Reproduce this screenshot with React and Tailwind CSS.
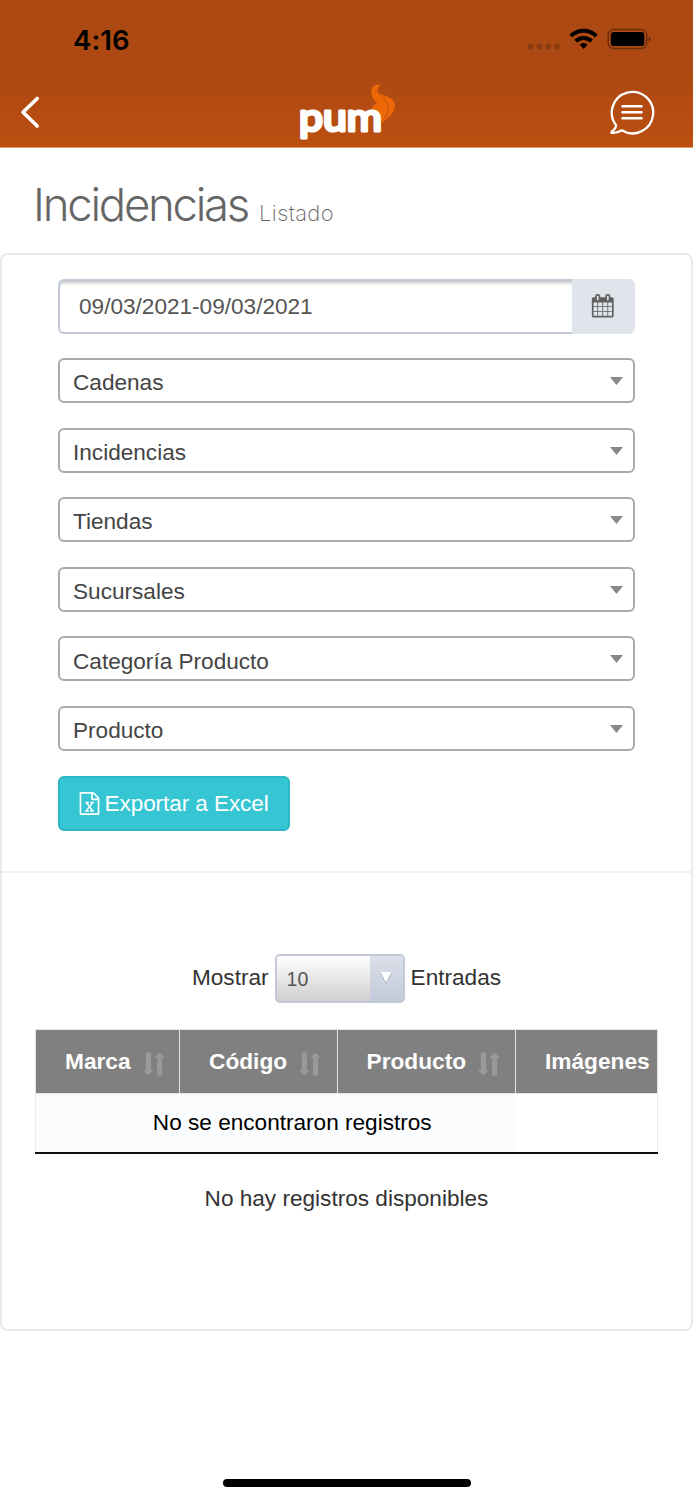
import React from 'react';

const filters = ['Cadenas', 'Incidencias', 'Tiendas', 'Sucursales', 'Categoría Producto', 'Producto'];

function CalendarIcon() {
  return (
    <svg className="h-[23.5px] w-[23.5px]" viewBox="0 0 1792 1792" fill="#606060">
      <path d="M192 1664h288v-288h-288v288zm352 0h320v-288h-320v288zm-352-352h288v-320h-288v320zm352 0h320v-320h-320v320zm-352-384h288v-288h-288v288zm736 736h320v-288h-320v288zm-384-736h320v-288h-320v288zm768 736h288v-288h-288v288zm-384-352h320v-320h-320v320zm-352-864v-288q0-13-9.5-22.5t-22.5-9.5h-64q-13 0-22.5 9.5t-9.5 22.5v288q0 13 9.5 22.5t22.5 9.5h64q13 0 22.5-9.5t9.5-22.5zm736 864h288v-320h-288v320zm-384-384h320v-288h-320v288zm384 0h288v-288h-288v288zm32-480v-288q0-13-9.5-22.5t-22.5-9.5h-64q-13 0-22.5 9.5t-9.5 22.5v288q0 13 9.5 22.5t22.5 9.5h64q13 0 22.5-9.5t9.5-22.5zm384-64v1280q0 52-38 90t-90 38h-1408q-52 0-90-38t-38-90v-1280q0-52 38-90t90-38h128v-96q0-66 47-113t113-47h64q66 0 113 47t47 113v96h384v-96q0-66 47-113t113-47h64q66 0 113 47t47 113v96h128q52 0 90 38t38 90z" />
    </svg>
  );
}

function ExcelIcon() {
  return (
    <svg className="h-[23px] w-[23px]" viewBox="0 0 1792 1792" fill="white">
      <path d="M1596 380q28 28 48 76t20 88v1152q0 40-28 68t-68 28h-1344q-40 0-68-28t-28-68v-1600q0-40 28-68t68-28h896q40 0 88 20t76 48zm-444-244v376h376q-10-29-22-41l-313-313q-12-12-41-22zm384 1528v-1024h-416q-40 0-68-28t-28-68v-416h-768v1536h1280zm-979-234v106h281v-106h-75l103-161q5-7 10-16.5t7.5-13.5 3.5-4h2q1 4 5 10 2 4 4.5 7.5t6 8 6.5 8.5l107 161h-76v106h291v-106h-68l-192-273 195-282h67v-107h-279v107h74l-103 159q-4 7-10 16.5t-9 13.5l-2 3h-2q-1-4-5-10-6-11-17-23l-106-159h76v-107h-290v107h68l189 272-194 283h-68z" />
    </svg>
  );
}

function SortIcon() {
  return (
    <svg className="mt-[5px] h-[24px] w-[22px]" viewBox="0 0 22 24" fill="#999999">
      <path d="M2.9 0.5h5v17.5h2.9L5.4 23.4 0 18h2.9z" />
      <path d="M14.1 23.4h5V6H22L16.6 0.5 11.2 6h2.9z" />
    </svg>
  );
}

function Header() {
  return (
    <header className="flex h-[148px] flex-col border-b border-[#e09a70] bg-linear-to-b from-[#ad4913] via-[#ad4812] via-50% to-[#bc4f11]">
      <div className="flex h-[78px] items-center justify-between pl-[73px] pr-[41px]">
        <span className="pt-[1px] font-['Inter'] text-[27.5px] leading-[30px] font-semibold tracking-[0.1px] text-black">4:16</span>
        <svg className="h-[22px] w-[125px]" viewBox="0 0 125 22">
          <g fill="#8a3a10">
            <rect x="1" y="15.8" width="5.4" height="5.6" rx="1.6" />
            <rect x="9.8" y="15.8" width="5.4" height="5.6" rx="1.6" />
            <rect x="18.6" y="15.8" width="5.4" height="5.6" rx="1.6" />
            <rect x="27.2" y="15.8" width="5.4" height="5.6" rx="1.6" />
          </g>
          <g fill="none" stroke="#000" strokeWidth="4">
            <path d="M43.9 8.1a18 18 0 0 1 25.4 0" />
            <path d="M48.6 13.2a11.4 11.4 0 0 1 16 0" />
          </g>
          <path d="M52.6 16.6a6.2 6.2 0 0 1 8 0L56.6 21z" fill="#000" />
          <rect x="81.2" y="1.6" width="38.5" height="19" rx="5.5" fill="none" stroke="#6e2e0c" strokeWidth="1.5" />
          <rect x="83.8" y="4.1" width="33.5" height="14" rx="3.2" />
          <path d="M121.7 8.2q2.2 1 2.2 2.9t-2.2 2.9z" fill="#6e2e0c" />
        </svg>
      </div>
      <div className="flex h-[69px] items-center justify-between pl-[20px] pr-[38px]">
        <svg className="mb-[2px] h-[34px] w-[22px]" viewBox="0 0 22 34" fill="none" stroke="white" strokeWidth="3.6" strokeLinecap="round" strokeLinejoin="round">
          <path d="M17.2 3.5L3 17.2 17.2 31" />
        </svg>
        <svg className="ml-[46px] h-[60px] w-[104px]" viewBox="0 0 104 60">
          <path d="M84.500 1.800C79 .5 74.300 3.500 74.300 9c0 6 4.500 9 5.800 12-3-.5-5.500 3-5.500 7.500 4 0 8.500 3 9.500 7.500l1.500 3.500C91 35 98 30 98 22.500 98 15.500 90 13.500 83.500 11 80.500 9.500 79 4 84.500 1.800z" fill="#ee6808" />
          <path d="M79 7c4 6 12 11 12.500 18 .3 5-3 8-5 12" fill="none" stroke="#b54d10" strokeWidth="0.9" />
          <text x="2" y="47.500" fontFamily="Lato, sans-serif" fontWeight="400" fontSize="39" fill="white" stroke="white" strokeWidth="3.2" strokeLinejoin="round" textLength="83" lengthAdjust="spacingAndGlyphs">pum</text>
        </svg>
        <svg className="mb-[2px] h-[46px] w-[46px]" viewBox="0 0 46 46" fill="none" stroke="white" strokeWidth="2.3" strokeLinecap="round" strokeLinejoin="round">
          <path d="M7.200 36.400A20.700 20.700 0 1 1 12.700 41.300Q8 44.500 2.600 43.800Q2 42.800 3.800 41.600Q6.800 39.500 7.200 36.400z" />
          <path d="M13.5 17.2h19M13.5 23.2h19M13.5 29.2h19" strokeWidth="2.6" />
        </svg>
      </div>
    </header>
  );
}

export default function App() {
  return (
    <div className="flex h-[1500px] w-[693px] flex-col overflow-hidden bg-white font-['Liberation_Sans',sans-serif] text-[22.6px] text-[#333]">
      <Header />
      <h1 className="flex h-[105px] items-baseline pl-[33px] pt-[25px] font-['Inter'] font-light text-[#666]">
        <span className="w-[226px] text-[45.5px] leading-[64px] tracking-[-2.25px]">Incidencias</span>
        <small className="text-[22px] font-extralight tracking-[0.4px] text-[#666]">Listado</small>
      </h1>
      <main className="h-[1078px] rounded-[8px] border-2 border-[#e7ecf1]">
        <form className="flex h-[618px] flex-col gap-[24.6px] border-b-2 border-[#edf1f5] pl-[56px] pr-[56.5px] pt-[23.5px]">
          <div className="flex h-[55px] shrink-0">
            <div className="flex flex-1 items-center rounded-l-[6px] border-2 border-r-0 border-[#c2cad8] pl-[19px] pt-[2px] text-[#555] shadow-[inset_0_4px_4px_-3px_#aaa]">
              09/03/2021-09/03/2021
            </div>
            <div className="flex w-[63px] items-center justify-center rounded-r-[6px] bg-[#e0e5ec]"><CalendarIcon /></div>
          </div>
          {filters.map((name) => (
            <div key={name} className="flex h-[45px] shrink-0 items-center justify-between rounded-[6px] border-2 border-[#aaa] pl-[13px] pr-[10px] pt-[5px] text-[#444]">
              {name}
              <svg className="mb-[4px] h-[8px] w-[13px]" viewBox="0 0 13 8" fill="#888"><path d="M0 0h13L6.5 8z" /></svg>
            </div>
          ))}
          <div className="flex h-[55px] w-[232px] shrink-0 items-center gap-[4px] rounded-[6px] border-2 border-[#2bb8c4] bg-[#36c6d3] pl-[17.5px] text-white">
            <ExcelIcon />
            <span className="whitespace-nowrap pt-[2px] tracking-[-0.1px]">Exportar a Excel</span>
          </div>
        </form>
        <section className="px-[33px] pt-[81px]">
          <div className="flex items-center justify-center gap-[6px]">
            <span className="pb-[2px]">Mostrar</span>
            <div className="flex h-[49px] w-[130px] overflow-hidden rounded-[5px] border-2 border-[#c2cad8] bg-linear-to-b from-white to-[#cfcfcf]">
              <span className="flex flex-1 items-center pl-[10px] pt-[3px] text-[19.5px] text-[#555]">10</span>
              <div className="flex w-[33px] justify-center bg-linear-to-b from-[#dadfe8] to-[#c2cada] pt-[16px]">
                <svg className="h-[12px] w-[12px]" viewBox="0 0 12 12"><path d="M0 1h12L6 12z" fill="#aab0ba" /><path d="M0.5 0h11L6 10.5z" fill="white" /></svg>
              </div>
            </div>
            <span className="pb-[2px]">Entradas</span>
          </div>
          <table className="mt-[26px] w-[623px] table-fixed border-collapse border border-[#e7ecf1]">
            <colgroup>
              <col className="w-[144px]" />
              <col className="w-[157.5px]" />
              <col className="w-[178.5px]" />
              <col />
            </colgroup>
            <thead>
              <tr className="h-[64px] bg-[#808080] text-left text-[22.7px] text-white">
                {['Marca', 'Código', 'Producto', 'Imágenes'].map((name) => (
                  <th key={name} className="border border-[#dfe5eb] py-0 pl-[29px] font-bold">
                    <div className="flex items-center gap-[12px]">{name}{name !== 'Imágenes' && <SortIcon />}</div>
                  </th>
                ))}
              </tr>
            </thead>
            <tbody>
              <tr className="h-[59px] border-b-2 border-[#111]">
                <td colSpan={3} className="bg-[#fbfcfd] p-0 pl-[33px] text-center text-black">No se encontraron registros</td>
                <td />
              </tr>
            </tbody>
          </table>
          <p className="mt-[28px] text-center">No hay registros disponibles</p>
        </section>
      </main>
      <div className="mx-auto mt-[148px] h-[8px] w-[248px] shrink-0 rounded-full bg-black" />
    </div>
  );
}
